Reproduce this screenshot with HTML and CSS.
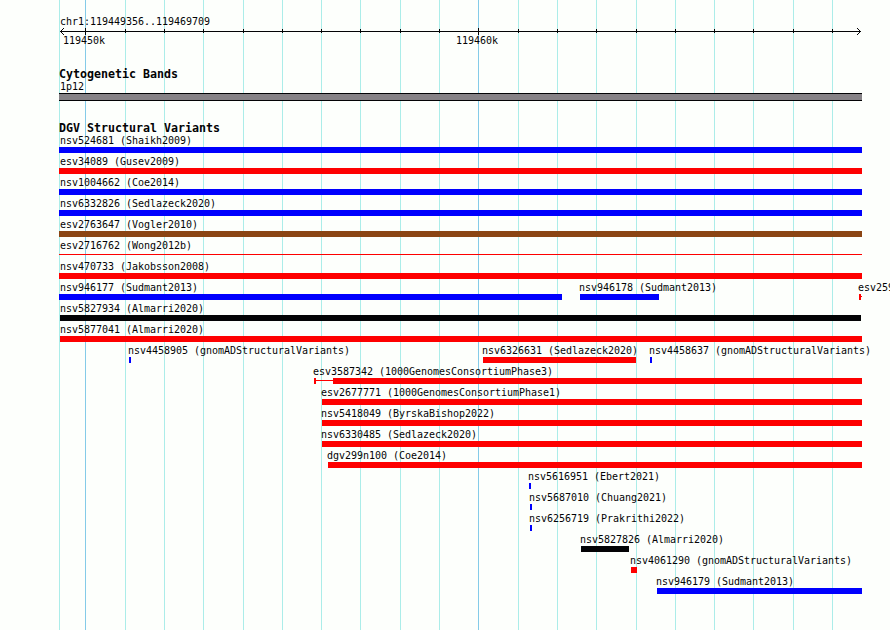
FILE: index.html
```html
<!DOCTYPE html>
<html lang="en">
<head>
<meta charset="utf-8">
<title>chr1:119449356..119469709</title>
<link rel="stylesheet" href="styles.css">
</head>
<body>
<main class="browser">
  <svg class="gridlines" width="890" height="630" shape-rendering="crispEdges" aria-hidden="true">
    <path class="minor" d="M59.5 0V630M125.5 0V630M164.5 0V630M203.5 0V630M243.5 0V630M282.5 0V630M321.5 0V630M360.5 0V630M400.5 0V630M439.5 0V630M518.5 0V630M557.5 0V630M596.5 0V630M636.5 0V630M675.5 0V630M714.5 0V630M753.5 0V630M793.5 0V630M832.5 0V630"/>
    <path class="major" d="M85.5 0V630M478.5 0V630"/>
  </svg>

  <header class="ruler">
    <div class="label region">chr1:119449356..119469709</div>
    <svg class="axis" width="803" height="9" viewBox="59 27 803 9" shape-rendering="crispEdges" aria-hidden="true">
      <path d="M60 31.5H861M85.5 28V35M478.5 28V35M125.5 29V33M164.5 29V33M203.5 29V33M243.5 29V33M282.5 29V33M321.5 29V33M360.5 29V33M400.5 29V33M439.5 29V33M518.5 29V33M557.5 29V33M596.5 29V33M636.5 29V33M675.5 29V33M714.5 29V33M753.5 29V33M793.5 29V33M832.5 29V33"/>
      <path d="M61 30.5h1M62 29.5h1M63 28.5h1M61 32.5h1M62 33.5h1M63 34.5h1M859 30.5h1M858 29.5h1M857 28.5h1M859 32.5h1M858 33.5h1M857 34.5h1"/>
    </svg>
    <div class="scale"><span class="label">119450k</span><span class="label">119460k</span></div>
  </header>

  <section class="track cytobands">
    <h2>Cytogenetic Bands</h2>
    <div class="label band-name">1p12</div>
    <div class="band"></div>
  </section>

  <section class="track variants">
    <h2>DGV Structural Variants</h2>
    <div class="row"><div class="feature edge"><span class="label">nsv524681 (Shaikh2009)</span><i class="bar gain" style="width:803px"></i></div></div>
    <div class="row"><div class="feature edge"><span class="label">esv34089 (Gusev2009)</span><i class="bar loss" style="width:803px"></i></div></div>
    <div class="row"><div class="feature edge"><span class="label">nsv1004662 (Coe2014)</span><i class="bar gain" style="width:803px"></i></div></div>
    <div class="row"><div class="feature edge"><span class="label">nsv6332826 (Sedlazeck2020)</span><i class="bar gain" style="width:803px"></i></div></div>
    <div class="row"><div class="feature edge"><span class="label">esv2763647 (Vogler2010)</span><i class="bar both" style="width:803px"></i></div></div>
    <div class="row"><div class="feature edge"><span class="label">esv2716762 (Wong2012b)</span><i class="bar loss thin" style="width:803px"></i></div></div>
    <div class="row"><div class="feature edge"><span class="label">nsv470733 (Jakobsson2008)</span><i class="bar loss" style="width:803px"></i></div></div>
    <div class="row">
      <div class="feature edge"><span class="label">nsv946177 (Sudmant2013)</span><i class="bar gain" style="width:503px"></i></div>
      <div class="feature" style="margin-left:521px"><span class="label">nsv946178 (Sudmant2013)</span><i class="bar gain" style="width:79px"></i></div>
      <div class="feature" style="margin-left:800px"><span class="label">esv259</span><div class="parts"><i class="bar loss" style="width:2px"></i><i class="bar loss thin" style="width:1px"></i></div></div>
    </div>
    <div class="row"><div class="feature edge inset" style="margin-left:1px"><span class="label">nsv5827934 (Almarri2020)</span><i class="bar complex" style="width:801px"></i></div></div>
    <div class="row"><div class="feature edge inset" style="margin-left:1px"><span class="label">nsv5877041 (Almarri2020)</span><i class="bar loss" style="width:802px"></i></div></div>
    <div class="row">
      <div class="feature" style="margin-left:70px"><span class="label">nsv4458905 (gnomADStructuralVariants)</span><i class="bar gain" style="width:2px"></i></div>
      <div class="feature" style="margin-left:424px"><span class="label">nsv6326631 (Sedlazeck2020)</span><i class="bar loss" style="width:153px"></i></div>
      <div class="feature" style="margin-left:591px"><span class="label">nsv4458637 (gnomADStructuralVariants)</span><i class="bar gain" style="width:2px"></i></div>
    </div>
    <div class="row"><div class="feature" style="margin-left:255px"><span class="label">esv3587342 (1000GenomesConsortiumPhase3)</span><div class="parts"><i class="bar loss" style="width:2px"></i><i class="bar loss thin" style="width:17px"></i><i class="bar loss" style="width:529px"></i></div></div></div>
    <div class="row"><div class="feature" style="margin-left:263px"><span class="label">esv2677771 (1000GenomesConsortiumPhase1)</span><i class="bar loss" style="width:540px"></i></div></div>
    <div class="row"><div class="feature" style="margin-left:263px"><span class="label">nsv5418049 (ByrskaBishop2022)</span><i class="bar loss" style="width:540px"></i></div></div>
    <div class="row"><div class="feature" style="margin-left:263px"><span class="label">nsv6330485 (Sedlazeck2020)</span><i class="bar loss" style="width:540px"></i></div></div>
    <div class="row"><div class="feature" style="margin-left:269px"><span class="label">dgv299n100 (Coe2014)</span><i class="bar loss" style="width:534px"></i></div></div>
    <div class="row"><div class="feature" style="margin-left:470px"><span class="label">nsv5616951 (Ebert2021)</span><i class="bar gain" style="width:2px"></i></div></div>
    <div class="row"><div class="feature" style="margin-left:471px"><span class="label">nsv5687010 (Chuang2021)</span><i class="bar gain" style="width:2px"></i></div></div>
    <div class="row"><div class="feature" style="margin-left:471px"><span class="label">nsv6256719 (Prakrithi2022)</span><i class="bar gain" style="width:2px"></i></div></div>
    <div class="row"><div class="feature" style="margin-left:522px"><span class="label">nsv5827826 (Almarri2020)</span><i class="bar complex" style="width:48px"></i></div></div>
    <div class="row"><div class="feature" style="margin-left:572px"><span class="label">nsv4061290 (gnomADStructuralVariants)</span><i class="bar loss" style="width:6px"></i></div></div>
    <div class="row"><div class="feature" style="margin-left:598px"><span class="label">nsv946179 (Sudmant2013)</span><i class="bar gain" style="width:205px"></i></div></div>
  </section>
</main>
</body>
</html>
```
FILE: styles.css
```css
* {
  box-sizing: border-box;
}

body {
  margin: 0;
  background: #fdfffc;
  color: #030305;
  font-family: "DejaVu Sans Mono", "Liberation Mono", monospace;
}

.browser {
  position: relative;
  width: 890px;
  height: 630px;
  padding: 15px 0 0 59px;
  overflow: hidden;
}

/* Coordinate lines run the full height, behind every track. */
.gridlines {
  position: absolute;
  top: 0;
  left: 0;
}

.gridlines path,
.axis path {
  fill: none;
  stroke-width: 1;
}

.minor {
  stroke: #abede9;
}

.major {
  stroke: #84cbe8;
}

.ruler,
.track {
  position: relative;
}

.label {
  display: block;
  height: 13px;
  font-size: 10px;
  line-height: 13px;
  letter-spacing: -0.02px;
  white-space: nowrap;
}

.ruler {
  height: 52px;
}

.region {
  height: 12px;
  padding-left: 1px;
}

.axis {
  display: block;
  stroke: #030305;
}

.scale {
  display: flex;
  gap: 351px;
  margin-top: -2px;
  padding-left: 4px;
}

h2 {
  height: 13px;
  margin: 0;
  font-size: 11.63px;
  font-weight: bold;
  line-height: 14px;
  white-space: nowrap;
}

.cytobands {
  height: 54px;
}

.band-name {
  padding-left: 1px;
}

.band {
  width: 803px;
  height: 8px;
  border: solid #030305;
  border-width: 1px 0;
  background: #868286;
}

/* Features on one line share a single grid cell and are offset by start. */
.row {
  display: grid;
  height: 21px;
}

.feature {
  grid-area: 1 / 1;
}

.feature .label {
  margin-left: -1px;
}

.edge .label {
  margin-left: 1px;
}

.inset .label {
  margin-left: 0;
}

.parts {
  display: flex;
}

.bar {
  display: block;
  height: 6px;
}

.thin {
  height: 1px;
  margin-top: 2px;
}

.gain {
  background: #0000fe;
}

.loss {
  background: #fe0000;
}

.both {
  background: #8b4513;
}

.complex {
  background: #030305;
}
```
